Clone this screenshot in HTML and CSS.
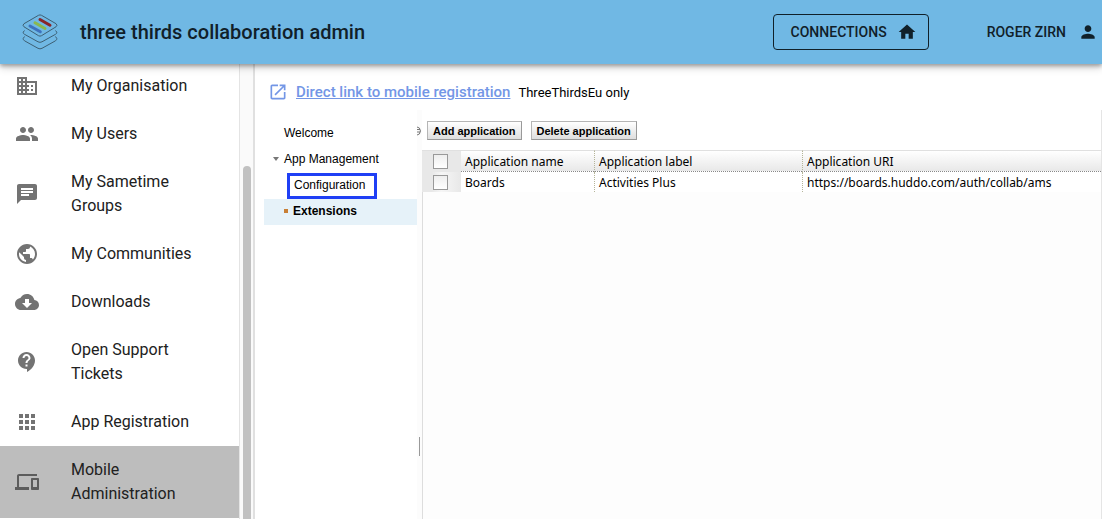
FILE: index.html
```html
<!DOCTYPE html>
<html lang="en">
<head>
<meta charset="utf-8">
<title>three thirds collaboration admin</title>
<link rel="stylesheet" href="styles.css">
</head>
<body>
<header class="topbar">
  <svg class="logo" viewBox="0 0 36 36" fill="none" stroke="#3d5f73" stroke-width="1" stroke-linejoin="round">
    <path d="M2.500 16.500L1.200 18.200Q1 19.500 2.500 20.300L16 27.800Q18 28.900 20 27.800L33.500 20.300Q35 19.500 34.800 18.200L33.500 16.500"/>
    <path d="M2.500 22.500L1.200 24.500Q1 25.800 2.500 26.800L16 34.300Q18 35.400 20 34.300L33.500 26.800Q35 25.800 34.800 24.500L33.500 22.500"/>
    <path d="M16.500 1.300Q18 .5 19.500 1.300L34 9.700Q36 11.200 34 12.800L19.500 21.700Q18 22.600 16.500 21.700L2 12.800Q0 11.200 2 9.700Z"/>
    <g stroke-width="3" stroke-linecap="round"><path stroke="#8a2528" d="M18 5.500L28 11.300"/><path stroke="#8bb84e" d="M13 8.700L23 14.500"/><path stroke="#3e72bd" d="M8 12L18.300 17.700"/></g>
  </svg>
  <h1 class="title">three thirds collaboration admin</h1>
  <button class="connections" type="button">CONNECTIONS
    <svg class="icon-small" viewBox="0 0 24 24"><path d="M10 20v-6h4v6h5v-8h3L12 3 2 12h3v8z"/></svg>
  </button>
  <button class="account" type="button">ROGER ZIRN
    <svg class="icon-small" viewBox="0 0 24 24"><path d="M12 12c2.210 0 4-1.790 4-4s-1.790-4-4-4-4 1.790-4 4 1.790 4 4 4zm0 2c-2.670 0-8 1.340-8 4v2h16v-2c0-2.660-5.330-4-8-4z"/></svg>
  </button>
</header>
<div class="shell">
  <nav class="sidebar" aria-label="Main">
    <a class="item" href="#"><svg class="icon" viewBox="0 0 24 24"><path d="M12 7V3H2v18h20V7H12zM6 19H4v-2h2v2zm0-4H4v-2h2v2zm0-4H4V9h2v2zm0-4H4V5h2v2zm4 12H8v-2h2v2zm0-4H8v-2h2v2zm0-4H8V9h2v2zm0-4H8V5h2v2zm10 12h-8v-2h2v-2h-2v-2h2v-2h-2V9h8v10zm-2-8h-2v2h2v-2zm0 4h-2v2h2v-2z"/></svg><span>My Organisation</span></a>
    <a class="item" href="#"><svg class="icon" viewBox="0 0 24 24"><path d="M16 11c1.660 0 2.990-1.340 2.990-3S17.660 5 16 5c-1.660 0-3 1.340-3 3s1.340 3 3 3zm-8 0c1.660 0 2.990-1.340 2.990-3S9.660 5 8 5C6.340 5 5 6.340 5 8s1.340 3 3 3zm0 2c-2.330 0-7 1.170-7 3.500V19h14v-2.500c0-2.330-4.670-3.500-7-3.500zm8 0c-.29 0-.62.020-.97.050 1.160.84 1.970 1.970 1.970 3.450V19h6v-2.500c0-2.330-4.670-3.500-7-3.500z"/></svg><span>My Users</span></a>
    <a class="item" href="#"><svg class="icon" viewBox="0 0 24 24"><path d="M20 2H4c-1.100 0-1.990.9-1.990 2L2 22l4-4h14c1.100 0 2-.9 2-2V4c0-1.100-.9-2-2-2zM6 9h12v2H6V9zm8 5H6v-2h8v2zm4-6H6V6h12v2z"/></svg><span>My Sametime Groups</span></a>
    <a class="item" href="#"><svg class="icon" viewBox="0 0 24 24"><path d="M12 2C6.480 2 2 6.480 2 12s4.480 10 10 10 10-4.480 10-10S17.520 2 12 2zm-1 17.930c-3.950-.49-7-3.850-7-7.930 0-.62.080-1.210.21-1.790L9 15v1c0 1.100.9 2 2 2v1.930zm6.900-2.540c-.26-.81-1-1.390-1.900-1.390h-1v-3c0-.55-.45-1-1-1H8v-2h2c.55 0 1-.45 1-1V7h2c1.100 0 2-.9 2-2v-.41c2.930 1.190 5 4.060 5 7.410 0 2.080-.8 3.970-2.100 5.390z"/></svg><span>My Communities</span></a>
    <a class="item" href="#"><svg class="icon" viewBox="0 0 24 24"><path d="M19.350 10.040C18.670 6.590 15.640 4 12 4 9.110 4 6.600 5.640 5.350 8.040 2.340 8.360 0 10.910 0 14c0 3.310 2.690 6 6 6h13c2.760 0 5-2.240 5-5 0-2.640-2.050-4.780-4.650-4.960zM17 13l-5 5-5-5h3V9h4v4h3z"/></svg><span>Downloads</span></a>
    <a class="item" href="#"><svg class="icon" viewBox="0 0 24 24"><path d="M11.500 2C6.810 2 3 5.810 3 10.500S6.810 19 11.500 19h.5v3c4.860-2.340 8-7 8-11.500C20 5.810 16.190 2 11.500 2zm1 14.500h-2v-2h2v2zm0-3.500h-2c0-3.250 3-3 3-5 0-1.100-.9-2-2-2s-2 .9-2 2h-2c0-2.210 1.790-4 4-4s4 1.790 4 4c0 2.500-3 2.750-3 5z"/></svg><span>Open Support Tickets</span></a>
    <a class="item" href="#"><svg class="icon" viewBox="0 0 24 24"><path d="M4 8h4V4H4v4zm6 12h4v-4h-4v4zm-6 0h4v-4H4v4zm0-6h4v-4H4v4zm6 0h4v-4h-4v4zm6-10v4h4V4h-4zm-6 4h4V4h-4v4zm6 6h4v-4h-4v4zm0 6h4v-4h-4v4z"/></svg><span>App Registration</span></a>
    <a class="item selected" href="#" aria-current="page"><svg class="icon" viewBox="0 0 24 24"><path d="M4 6h18V4H4c-1.100 0-2 .9-2 2v11H0v3h14v-3H4V6zm19 2h-6c-.55 0-1 .45-1 1v10c0 .55.45 1 1 1h6c.55 0 1-.45 1-1V9c0-.55-.45-1-1-1zm-1 9h-4v-7h4v7z"/></svg><span>Mobile Administration</span></a>
  </nav>
  <div class="scrollbar"><div class="thumb"></div></div>
  <main class="main">
    <div class="linkrow">
      <svg class="icon-link" viewBox="0 0 24 24"><path d="M19 19H5V5h7V3H5c-1.110 0-2 .9-2 2v14c0 1.100.89 2 2 2h14c1.100 0 2-.9 2-2v-7h-2v7zM14 3v2h3.590l-9.830 9.830 1.410 1.410L19 6.410V10h2V3h-7z"/></svg>
      <a class="direct" href="#">Direct link to mobile registration</a>
      <span class="note">ThreeThirdsEu only</span>
    </div>
    <div class="frame">
      <nav class="tree" aria-label="Applications">
        <a class="node" href="#">Welcome</a>
        <a class="node parent" href="#"><svg class="caret" viewBox="0 0 6 4"><path d="M0 0h6L3 4z"/></svg>App Management</a>
        <a class="node child" href="#"><span class="focus">Configuration</span></a>
        <a class="node current" href="#"><span class="bullet"></span>Extensions</a>
      </nav>
      <div class="splitter"><svg class="knob" viewBox="0 0 4 10" fill="none" stroke="#777"><path d="M0 1Q3 1 3.500 5Q3 9 0 9M0 3.500h3M0 6h3"/></svg><span class="grip"></span></div>
      <section class="content">
        <div class="toolbar">
          <button class="action" type="button">Add application</button>
          <button class="action" type="button">Delete application</button>
        </div>
        <table class="apps">
          <colgroup><col class="c-check"><col class="c-name"><col class="c-label"><col></colgroup>
          <thead><tr><th class="pick"><input class="box" type="checkbox" aria-label="Select all applications"></th><th>Application name</th><th>Application label</th><th>Application URI</th></tr></thead>
          <tbody><tr><td class="pick"><input class="box" type="checkbox" aria-label="Select Boards"></td><td>Boards</td><td>Activities Plus</td><td>https://boards.huddo.com/auth/collab/ams</td></tr></tbody>
        </table>
        <div class="blank"></div>
      </section>
    </div>
  </main>
</div>
</body>
</html>
```

FILE: styles.css
```css
* { box-sizing: border-box; }
body {
  margin: 0;
  height: 100vh;
  display: flex;
  flex-direction: column;
  overflow: hidden;
  background: #fff;
  color: #212121;
  font-family: Roboto, sans-serif;
}
a { color: inherit; text-decoration: none; }
button { font-family: inherit; color: inherit; margin: 0; }
svg { flex: none; display: block; }

.topbar {
  z-index: 1;
  flex: none;
  height: 64px;
  display: flex;
  align-items: center;
  padding: 0 6px 0 22px;
  background: #70b8e4;
  color: #102029;
  box-shadow: 0 2px 4px rgba(0, 0, 0, .3), 0 4px 8px rgba(0, 0, 0, .16);
}
.logo { width: 36px; height: 36px; }
.title { margin: 0 auto 0 22px; font-size: 20px; line-height: 32px; font-weight: 500; }
.connections, .account {
  display: flex;
  align-items: center;
  height: 36px;
  background: none;
  font-size: 14px;
  font-weight: 500;
  border: 0;
}
.connections { gap: 10px; padding: 0 11px 0 17px; border: 1px solid #102029; border-radius: 4px; margin-right: 58px; }
.account { gap: 12px; padding: 0; }
.icon-small { width: 20px; height: 20px; fill: currentColor; }
.account .icon-small { margin-right: -2px; }

.shell { flex: 1; min-height: 0; display: flex; }
.sidebar { flex: none; width: 239px; margin-top: -2px; }
.item { display: flex; align-items: center; gap: 32px; padding: 12px 32px 12px 15px; font-size: 16px; line-height: 24px; }
.item.selected { background: #bdbdbd; }
.icon { width: 24px; height: 24px; fill: #737373; }
.selected .icon { fill: #5c5c5c; }
.scrollbar {
  flex: none;
  width: 16px;
  padding: 102px 3px 0;
  border-left: 1px solid #e4e4e4;
  border-right: 2px solid #e0e0e0;
  background: #fafafa;
}
.thumb { width: 8px; height: 100%; border-radius: 4px 4px 0 0; background: #c1c1c1; }

.main { flex: 1; min-width: 0; display: flex; flex-direction: column; padding-left: 9px; }
.linkrow { display: flex; align-items: center; height: 46px; padding: 10px 0 0 4px; }
.icon-link { width: 20px; height: 20px; fill: #7396e6; }
.direct { margin: 0 8px; color: #7396e6; font-size: 15px; font-weight: 500; line-height: 20px; text-decoration: underline; }
.note { font-size: 13px; color: #000; }

.frame { flex: 1; display: flex; min-height: 0; color: #000; }
.tree { flex: none; width: 153px; padding-top: 11px; font-family: "Liberation Sans", Arial, sans-serif; font-size: 12px; }
.node { display: flex; align-items: center; height: 26px; padding-left: 20px; line-height: 16px; white-space: nowrap; padding-bottom: 2px; }
.parent { padding-left: 9px; gap: 5px; }
.caret { width: 6px; height: 4px; fill: #777; }
.child { padding-left: 23px; padding-bottom: 0; }
.focus { height: 26px; padding: 1px 9px 0 4px; line-height: 16px; border: 3px solid #1f3ff5; }
.current { gap: 5px; background: #e6f2f9; font-weight: bold; }
.bullet { width: 4px; height: 4px; background: #c87f35; }
.splitter { flex: none; width: 5px; background: #fcfcfc; display: flex; flex-direction: column; padding-top: 16px; }
.knob { width: 4px; height: 10px; }
.grip { width: 1px; height: 19px; margin: 301px 0 0 2px; background: #999; }

.content { flex: 1; min-width: 0; display: flex; flex-direction: column; border-right: 1px solid #e5e5e5; }
.toolbar { display: flex; gap: 9px; padding: 11px 5px 10px; }
.action {
  height: 19px;
  padding: 0 5px;
  border: 1px solid #b5b5b5;
  border-right-color: #999;
  border-bottom-color: #999;
  background: linear-gradient(#fff, #dedede);
  color: #000;
  font: bold 11px/16px "Liberation Sans", Arial, sans-serif;
}
.apps { width: 100%; table-layout: fixed; border-collapse: separate; border-spacing: 0; font: 12px/16px "Noto Sans", sans-serif; }
.c-check { width: 39px; }
.c-name { width: 133px; }
.c-label { width: 208px; }
.apps th, .apps td { height: 20px; padding: 2px 4px 1px; text-align: left; font-weight: 400; white-space: nowrap; }
.apps th { height: 21px; padding-top: 3px; border-top: 1px solid #e0e0e0; border-bottom: 1px dotted #888; background: linear-gradient(#fff, #e8e8e8); }
.apps tr > :nth-child(n+3) { border-left: 1px dotted #b5b599; }
.apps .pick { padding: 0 0 0 11px; vertical-align: middle; }
.apps th.pick { background: #e8e8e8; border-bottom-color: #e8e8e8; }
.apps td.pick { background: linear-gradient(90deg, #e8e8e8 25%, #f6f6f6 50%, #e8e8e8); }
.box { appearance: none; display: block; width: 15px; height: 15px; margin: 0; border: 1px solid #999; background: linear-gradient(#eee, #fff); }
.blank { flex: 1; background: #fdfdfd; border-left: 1px solid #ddd; }
```
